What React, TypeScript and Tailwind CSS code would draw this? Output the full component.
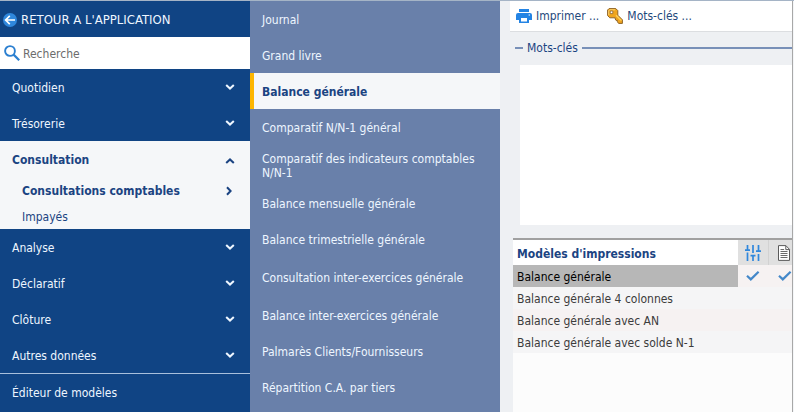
import { Fragment } from 'react';
import clsx from 'clsx';

interface Section {
  label: string;
  children?: string[];
}

const sections: Section[] = [
  { label: 'Quotidien' },
  { label: 'Trésorerie' },
  { label: 'Consultation', children: ['Consultations comptables', 'Impayés'] },
  { label: 'Analyse' },
  { label: 'Déclaratif' },
  { label: 'Clôture' },
  { label: 'Autres données' },
];

const reports = [
  { label: 'Journal' },
  { label: 'Grand livre' },
  { label: 'Balance générale', active: true },
  { label: 'Comparatif N/N-1 général' },
  { label: 'Comparatif des indicateurs comptables N/N-1', tall: true },
  { label: 'Balance mensuelle générale' },
  { label: 'Balance trimestrielle générale' },
  { label: 'Consultation inter-exercices générale', tall: true },
  { label: 'Balance inter-exercices générale' },
  { label: 'Palmarès Clients/Fournisseurs' },
  { label: 'Répartition C.A. par tiers' },
];

const models = [
  { name: 'Balance générale', selected: true },
  { name: 'Balance générale 4 colonnes' },
  { name: 'Balance générale avec AN' },
  { name: 'Balance générale avec solde N-1' },
];

const Chevron = ({ direction }: { direction: 'up' | 'down' | 'right' }) => (
  <svg
    className={clsx('size-2.5 shrink-0', direction === 'up' && 'rotate-180', direction === 'right' && '-rotate-90')}
    viewBox="0 0 10 10"
    fill="none"
    stroke="currentColor"
    strokeWidth="2"
  >
    <path d="M1.2 2 5 5.6 8.8 2" />
  </svg>
);

const BackIcon = () => (
  <svg className="size-3.5 shrink-0" viewBox="0 0 14 14" fill="none">
    <circle cx="7" cy="7" r="7" fill="#2f87dc" />
    <path d="M12 7H3M6.8 2.8 2.6 7l4.2 4.2" stroke="#fff" strokeWidth="1.7" />
  </svg>
);

const SearchIcon = () => (
  <svg className="size-4 shrink-0" viewBox="0 0 16 16" fill="none" stroke="#2b7fd0">
    <circle cx="6" cy="6" r="4.9" strokeWidth="1.9" />
    <path d="m9.6 9.6 5.6 5.6" strokeWidth="2.2" />
  </svg>
);

const PrinterIcon = () => (
  <svg className="size-4 shrink-0" viewBox="0 0 16 16">
    <path fill="#2484e4" d="M3 1h10v3H3zM2 5h12a2 2 0 0 1 2 2v5h-3v3H3v-3H0V7a2 2 0 0 1 2-2z" />
    <path fill="#fff" d="M5 10h6v3.4H5zM12.6 6.4H14v1.2h-1.4z" />
  </svg>
);

const KeyIcon = () => (
  <svg className="size-4 shrink-0" viewBox="0 0 16 16" strokeLinejoin="round">
    <path
      d="M2 .6h6.8l2 2v4.6l4.6 4.6v3.6h-3.8l-1.2-1.6v-1.4H9l-.8-1.4V9.8H2.8L.6 7.6V2z"
      fill="#f0a51e"
      stroke="#8f6428"
      strokeWidth="1"
    />
    <path d="M1.8 7V2.6l.8-.8h5.6" fill="none" stroke="#ffdc80" strokeWidth=".9" />
    <path d="m9 7.2 5.4 5.4" stroke="#ffd15c" strokeWidth="1.3" />
    <path d="M3.2 3h2.6v2.6H3.2z" fill="#fff" stroke="#8f6428" strokeWidth=".8" />
  </svg>
);

const SlidersIcon = () => (
  <svg className="mx-auto size-4" viewBox="0 0 16 16" fill="none" stroke="#2f87dc" strokeWidth="1.7">
    <path d="M2.5 0v4.5M0 5.2h5M2.5 7.5V16M8 0v8M5.5 10.7h5M8 11v5M13.5 0v5.5M11 6.2h5M13.5 9v7" />
  </svg>
);

const DocumentIcon = () => (
  <svg className="ml-2 h-4 w-3.5" viewBox="0 0 14 16" fill="#fff" stroke="#5a5a5a">
    <path d="M1.5.6h7.4l3.6 3.8v11H1.5z" />
    <path d="M8.8.8v3.8h3.6" fill="none" />
    <path d="M3.5 6.5h7M3.5 8.5h7M3.5 10.5h7M3.5 12.5h7M3.5 4.5h3.6" strokeWidth=".9" />
  </svg>
);

const CheckIcon = ({ className }: { className?: string }) => (
  <svg className={clsx('h-2.5 w-3.5', className)} viewBox="0 0 14 10" fill="none">
    <path d="M1 4.8 4.8 8.4 12.6.8" stroke="#4488c9" strokeWidth="2.2" />
  </svg>
);

const Sidebar = () => (
  <nav className="w-[250px] shrink-0 bg-[#104484] text-[#eef6ff]">
    <button className="flex h-9 w-full items-center gap-1 pt-0.5 pl-[3px] text-left text-[13px]">
      <BackIcon />
      RETOUR A L'APPLICATION
    </button>
    <div className="flex h-8 items-center gap-[3px] bg-white pl-1">
      <SearchIcon />
      <input
        type="text"
        aria-label="Recherche"
        placeholder="Recherche"
        className="h-full min-w-0 flex-1 bg-transparent pt-0.5 text-gray-700 outline-none placeholder:text-[#6c6c6c]"
      />
    </div>
    {sections.map(({ label, children }) => (
      <Fragment key={label}>
        <button
          aria-expanded={!!children}
          className={clsx(
            'flex h-9 w-full items-center justify-between pt-0.5 pr-[15px] pl-3 text-left',
            children && 'bg-[#f5f7f9] font-bold text-[#1b4482]'
          )}
        >
          {label}
          <Chevron direction={children ? 'up' : 'down'} />
        </button>
        {children && (
          <ul className="bg-[#f5f7f9] text-[#1b4482]">
            {children.map((child, i) => (
              <li key={child}>
                <a
                  href="#"
                  className={clsx(
                    'flex h-[26px] items-center justify-between pt-0.5 pr-[15px] pl-[22px]',
                    i === 0 && 'font-bold'
                  )}
                >
                  {child}
                  {i === 0 && <Chevron direction="right" />}
                </a>
              </li>
            ))}
          </ul>
        )}
      </Fragment>
    ))}
    <a href="#" className="flex h-[37px] items-center border-t border-[#a9c0dc] pt-0.5 pl-3">
      Éditeur de modèles
    </a>
  </nav>
);

const ReportList = () => (
  <nav className="w-[250px] shrink-0 bg-[#6980aa] text-[#eef6ff]">
    {reports.map(({ label, active, tall }) => (
      <a
        key={label}
        href="#"
        className={clsx(
          'flex items-center border-l-4 pt-0.5 pr-6 pl-2 leading-[14px]',
          tall ? 'h-10' : 'h-9',
          active ? 'border-[#fdb600] bg-[#f5f7f9] font-bold text-[#1b4482]' : 'border-transparent'
        )}
      >
        {label}
      </a>
    ))}
  </nav>
);

const ModelTable = () => (
  <table className="w-full table-fixed border-separate border-spacing-0 border-t-2 border-[#a0a0a0] text-left text-[#3c3c3c]">
    <colgroup>
      <col />
      <col className="w-[30px]" />
      <col className="w-6" />
    </colgroup>
    <thead>
      <tr className="h-[25px]">
        <th className="bg-white pt-0.5 pl-1 font-bold text-[#1b4482]">Modèles d'impressions</th>
        <th className="bg-[#e0e0e0]" aria-label="Paramètres">
          <SlidersIcon />
        </th>
        <th className="border-l border-[#d2d2d2] bg-[#e0e0e0]" aria-label="Document">
          <DocumentIcon />
        </th>
      </tr>
    </thead>
    <tbody>
      {models.map(({ name, selected }) => (
        <tr key={name} className="h-[22px] odd:bg-[#f6f2f2] even:bg-[#f5f5f6]">
          <td className={clsx('pt-0.5 pl-1', selected && 'bg-[#b7b7b7] text-black')}>{name}</td>
          <td>{selected && <CheckIcon className="mx-auto" />}</td>
          <td>{selected && <CheckIcon className="ml-2.5" />}</td>
        </tr>
      ))}
    </tbody>
  </table>
);

const PrintPanel = () => (
  <main className="flex min-w-0 flex-1 flex-col border-r border-[#a8a8a8] bg-[#eef0f3] pl-2.5 text-[#1f4a7c]">
    <div className="flex h-[31px] items-center gap-2 border-b border-[#dcdee1] bg-white pl-1.5">
      <button className="flex items-center gap-1">
        <PrinterIcon />
        Imprimer ...
      </button>
      <button className="flex items-center gap-1">
        <KeyIcon />
        Mots-clés ...
      </button>
    </div>
    <fieldset className="mt-2 ml-[5px] border-t-2 border-[#7890b8] pl-[5px]">
      <legend className="ml-[3px] px-1 text-[#1b4482]">Mots-clés</legend>
      <textarea aria-label="Mots-clés" className="mt-[9px] block h-40 w-full resize-none bg-white outline-none" />
    </fieldset>
    <div className="mt-[13px] ml-[3px] flex-1 bg-[#fcfcfc]">
      <ModelTable />
    </div>
  </main>
);

const App = () => {
  return (
    <div className="flex min-h-screen border-t border-[#a5b4c6] bg-[#f4f6f8] pr-px font-['DejaVu_Sans_Condensed','DejaVu_Sans',sans-serif] text-xs">
      <Sidebar />
      <ReportList />
      <PrintPanel />
    </div>
  );
};

export default App;
